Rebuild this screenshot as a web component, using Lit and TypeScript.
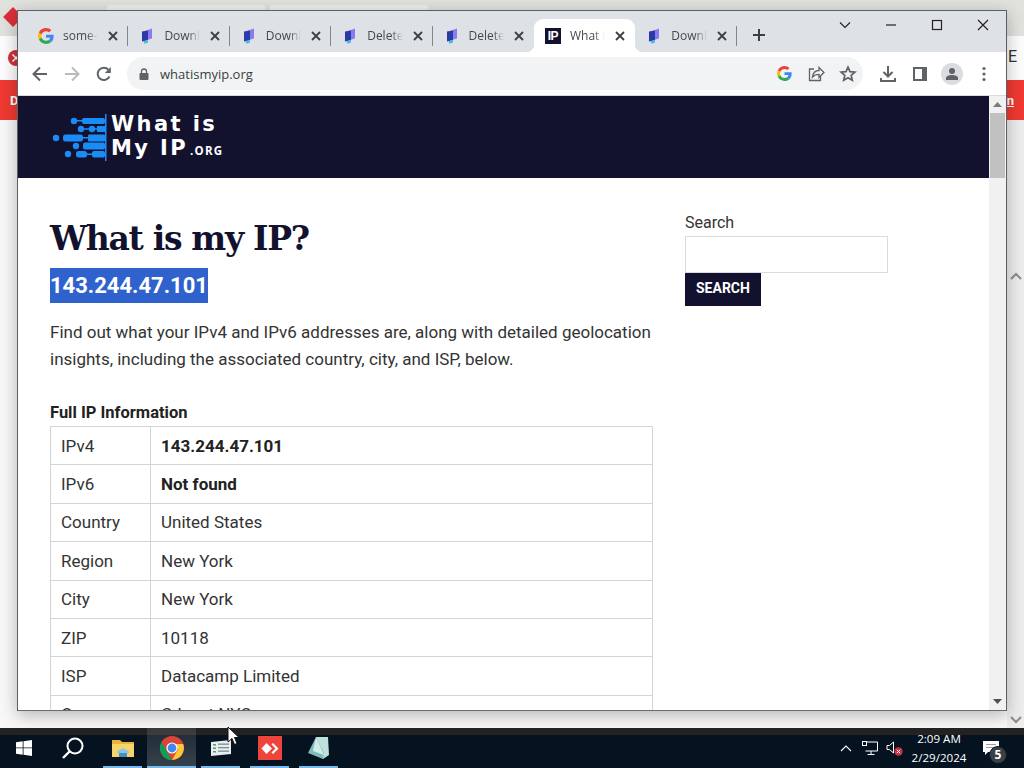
import { LitElement, html, css, svg } from "lit";
import { customElement } from "lit/decorators.js";

const gLogo = html`<svg class="g" viewBox="0 0 48 48"><path fill="#EA4335" d="M24 9.5c3.54 0 6.71 1.22 9.21 3.6l6.85-6.85C35.9 2.38 30.47 0 24 0 14.62 0 6.51 5.38 2.56 13.22l7.98 6.19C12.43 13.72 17.74 9.5 24 9.5z"/><path fill="#4285F4" d="M46.98 24.55c0-1.57-.15-3.09-.38-4.55H24v9.02h12.94c-.58 2.96-2.26 5.48-4.78 7.18l7.73 6c4.51-4.18 7.09-10.36 7.09-17.65z"/><path fill="#FBBC05" d="M10.53 28.59c-.48-1.45-.76-2.99-.76-4.59s.27-3.14.76-4.59l-7.98-6.19C.92 16.46 0 20.12 0 24c0 3.88.92 7.54 2.56 10.78l7.97-6.19z"/><path fill="#34A853" d="M24 48c6.48 0 11.93-2.13 15.89-5.81l-7.73-6c-2.15 1.45-4.92 2.3-8.16 2.3-6.26 0-11.57-4.22-13.47-9.91l-7.98 6.19C6.51 42.62 14.62 48 24 48z"/></svg>`;

const flag = html`<svg class="g" viewBox="0 0 16 16"><path fill="#8a7bf0" d="M6 3 13 .5v10L6 12.500z"/><path fill="#2a3ba8" d="M3 3.500 9 2.500v9.500l-6 1.500z"/><path fill="#45bcdc" d="M4.500 13.200 9 12v2.500l-3.500 1.300z"/></svg>`;
const ipIcon = html`<span class="ipfav">IP</span>`;

const tabs = [
  { icon: gLogo, title: "some-" },
  { icon: flag, title: "Downl" },
  { icon: flag, title: "Downl" },
  { icon: flag, title: "Delete" },
  { icon: flag, title: "Delete" },
  { icon: ipIcon, title: "What i", active: true },
  { icon: flag, title: "Downl" },
];

const rows: [string, string, boolean?][] = [
  ["IPv4", "143.244.47.101", true],
  ["IPv6", "Not found", true],
  ["Country", "United States"],
  ["Region", "New York"],
  ["City", "New York"],
  ["ZIP", "10118"],
  ["ISP", "Datacamp Limited"],
  ["Org", "Cdnext NYC"],
];

const x = html`<svg class="x" viewBox="0 0 10 10"><path d="M1 1l8 8M9 1l-8 8" stroke="#3c4043" stroke-width="1.800" fill="none"/></svg>`;

@customElement("app-root")
export class AppRoot extends LitElement {
  static styles = css`
    :host { display: flex; flex-direction: column; width: 1024px; height: 768px; overflow: hidden; position: relative; background: #f2f2f2; font-family: Roboto, sans-serif; }
    .desktop { flex: 1; position: relative; background: linear-gradient(#fdfdfd 120px, #f8f8f8 120px); }
    .top { position: absolute; left: 0; right: 0; top: 0; height: 36px; background: #e1e1de; }
    .ghost { position: absolute; top: 5px; height: 8px; background: #eeeeec; border-radius: 3px 3px 0 0; }
    .ghost.a { left: 107px; width: 158px; }
    .ghost.b { left: 270px; width: 158px; }
    .diamond { position: absolute; left: 6px; top: 10px; width: 14px; height: 14px; background: #dc2f3c; transform: rotate(45deg); }
    .errdot { position: absolute; left: 8px; top: 50px; width: 16px; height: 16px; display: block; }
    .edge { position: absolute; left: 1008px; top: 47px; font-size: 16px; line-height: 20px; color: #333; }
    .banner { position: absolute; left: 0; right: 0; top: 80px; height: 40px; background: #f03a33; color: #fff; font-size: 13px; font-weight: 700; display: flex; align-items: center; justify-content: space-between; padding: 0 10px; box-sizing: border-box; }
    .rightbar { position: absolute; left: 1007px; right: 0; top: 120px; bottom: 0; background: #ededed; }
    .chev { position: absolute; left: 1010px; width: 12px; height: 8px; }
    .win { position: absolute; left: 17px; top: 10px; width: 990px; height: 701px; box-sizing: border-box; border: 1px solid #5c5f63; border-bottom-color: #6b6b6b; background: #fff; box-shadow: 0 4px 16px rgba(0,0,0,.28); display: flex; flex-direction: column; overflow: hidden; }
    .strip { height: 41px; flex: none; background: #dee1e6; display: flex; padding-left: 9px; font-family: "Open Sans", sans-serif; }
    .tabs { display: flex; align-items: flex-end; flex: 1; }
    .tab { width: 101.4px; height: 33px; box-sizing: border-box; display: flex; align-items: center; padding: 0 7px 0 11px; position: relative; flex: none; }
    .tab.sep::after { content: ""; position: absolute; right: 0; top: 7px; height: 20px; width: 1px; background: #80868b; }
    .tab.active { background: #fff; border-radius: 9px 9px 0 0; }
    .tab.active::before { content: ""; position: absolute; left: -8px; bottom: 0; width: 8px; height: 8px; background: radial-gradient(circle at 0 0, transparent 8px, #fff 8.500px); }
    .tab.active::after { content: ""; position: absolute; right: -8px; bottom: 0; width: 8px; height: 8px; background: radial-gradient(circle at 100% 0, transparent 8px, #fff 8.500px); }
    .g { width: 16px; height: 16px; flex: none; display: block; }
    .ipfav { width: 16px; height: 16px; flex: none; background: #12122f; color: #fff; font: 700 12px/16px "Liberation Sans Narrow", "Liberation Sans", sans-serif; text-align: center; letter-spacing: -.5px; }
    .title { margin-left: 9px; flex: 1; min-width: 0; overflow: hidden; white-space: nowrap; font-size: 12px; color: #45494e; -webkit-mask-image: linear-gradient(90deg, #000 68%, transparent 100%); mask-image: linear-gradient(90deg, #000 68%, transparent 100%); }
    .x { width: 10px; height: 10px; margin: 0 3px 0 10px; flex: none; display: block; }
    .plus { width: 14px; height: 14px; margin: 0 0 3px 15px; align-self: center; flex: none; position: relative; top: 5px; }
    .ctl { display: flex; align-items: flex-start; }
    .ctl div { width: 46px; height: 28px; display: flex; align-items: center; justify-content: center; }
    .ctl svg { width: 12px; height: 12px; display: block; }
    .bar { height: 43px; flex: none; background: #fff; border-bottom: 1px solid #d8dadd; display: flex; align-items: center; box-sizing: content-box; padding-left: 6px; }
    .nav { width: 32px; height: 32px; display: flex; align-items: center; justify-content: center; flex: none; }
    .nav svg { width: 18px; height: 18px; display: block; }
    .omni { margin-left: 7px; width: 736px; height: 33px; border-radius: 17px; background: #f1f3f4; display: flex; align-items: center; padding-left: 12px; box-sizing: border-box; flex: none; }
    .lock { width: 10px; height: 12px; flex: none; display: block; }
    .url { margin-left: 11px; font: 13px "Open Sans", sans-serif; color: #3c4043; flex: 1; }
    .omni .nav svg.g { width: 15px; height: 15px; }
    .omni .right { display: flex; margin-right: -1px; }
    .tools { display: flex; margin-left: 9px; }
    .avatar { width: 22px; height: 22px; border-radius: 50%; background: #dadce0; display: flex; align-items: center; justify-content: center; }
    .avatar svg { width: 14px; height: 14px; }
    .body { flex: 1; min-height: 0; display: flex; }
    .page { flex: 1; min-width: 0; overflow: hidden; background: #fff; color: #333; }
    .head { height: 82px; background: #12122f; display: flex; align-items: center; padding-left: 34px; }
    .logo { width: 57px; height: 48px; flex: none; display: block; }
    .wm { margin: -3px 0 0 2px; color: #fff; font: 700 21px/24px "DejaVu Sans", sans-serif; letter-spacing: 2.4px; white-space: nowrap; }
    .wm small { font: 700 11.500px "Open Sans", sans-serif; letter-spacing: 1.200px; margin-left: 2px; }
    .content { display: flex; padding: 35px 0 0 32px; gap: 32px; }
    .main { width: 603px; flex: none; }
    h1 { margin: 0; font: 700 33px/52px "DejaVu Serif", serif; color: #12122f; letter-spacing: -1.300px; }
    .ip { display: inline-block; background: #2f62cc; color: #fff; font-weight: 700; font-size: 22px; line-height: 35px; margin-top: 3px; vertical-align: top; }
    .intro { margin: 16px 0 0; font-size: 17px; line-height: 27px; color: #333; }
    h2 { margin: 27px 0 0; font-size: 16.500px; line-height: 26px; font-weight: 700; color: #222; }
    table { border-collapse: collapse; width: 603px; margin-top: 0; font-size: 17px; color: #333; table-layout: fixed; }
    td { border: 1px solid #d4d4d4; padding: 0 10px; height: 37.400px; box-sizing: content-box; }
    td:first-child { width: 79px; }
    td b { color: #222; }
    .side { width: 203px; flex: none; }
    .side label { display: block; font-size: 16px; line-height: 20px; color: #333; }
    .input { height: 37px; box-sizing: border-box; border: 1px solid #dcdce0; margin-top: 3px; }
    .btn { display: inline-block; background: #12122f; color: #fff; font-weight: 700; font-size: 14px; line-height: 31px; padding: 0 11px 2px; }
    .scroll { width: 17px; flex: none; background: #f1f1f1; display: flex; flex-direction: column; align-items: center; }
    .scroll svg { width: 9px; height: 5px; display: block; flex: none; }
    .thumb { width: 15px; height: 65px; background: #c1c1c1; margin-top: 6px; flex: none; }
    .sp { flex: 1; }
    .scroll .up { margin-top: 6px; }
    .scroll .dn { margin-bottom: 6px; }
    .task { height: 40px; flex: none; background: linear-gradient(#242324 7px, #04131f 7px); display: flex; align-items: stretch; color: #fff; font-family: "Open Sans", sans-serif; }
    .slot { display: flex; align-items: center; justify-content: center; position: relative; width: 49px; flex: none; }
    .slot.s0 { width: 48px; }
    .slot.s1 { width: 50px; }
    .slot.on::after { content: ""; position: absolute; left: 5px; right: 5px; bottom: 0; height: 2px; background: #76b9ed; }
    .slot.hl { background: linear-gradient(rgba(255,255,255,.1), rgba(255,255,255,.2)); }
    .slot.hl::after { left: 0; right: 0; }
    .slot svg { display: block; }
    .tray { margin-left: auto; display: flex; align-items: stretch; }
    .tray .ti { display: flex; align-items: center; justify-content: center; width: 24px; }
    .clock { width: 62px; margin-left: 2px; display: flex; flex-direction: column; justify-content: center; align-items: center; font-size: 11.600px; line-height: 19px; white-space: nowrap; }
    .notif { width: 48px; display: flex; align-items: center; justify-content: center; position: relative; margin-right: 8px; margin-left: -2px; }
    .notif svg { margin-left: -2px; }
    .badge { position: absolute; left: 21px; top: 18px; width: 16px; height: 16px; border-radius: 50%; background: #3b4044; border: 1px solid #0a1722; color: #fff; font-size: 12px; font-weight: 700; line-height: 16px; text-align: center; }
    .cursor { position: absolute; left: 227px; top: 726px; width: 13px; height: 20px; }
  `;

  render() {
    const I = "#5f6368";
    return html`
      <div class="desktop">
        <div class="top"></div>
        <div class="ghost a"></div><div class="ghost b"></div>
        <div class="diamond"></div>
        <svg class="errdot" viewBox="0 0 16 16"><circle cx="8" cy="8" r="8" fill="#d3303c"/><path d="M4.500 4.500l7 7M11.500 4.500l-7 7" stroke="#fff" stroke-width="1.500"/></svg>
        <span class="edge">E</span>
        <div class="banner"><span>D</span><u>n</u></div>
        <div class="rightbar"></div>
        <svg class="chev" style="top:272px" viewBox="0 0 12 8"><path d="M1 7l5-5 5 5" stroke="#8c8c8c" stroke-width="2" fill="none"/></svg>
        <svg class="chev" style="top:716px" viewBox="0 0 12 8"><path d="M1 1l5 5 5-5" stroke="#8c8c8c" stroke-width="2" fill="none"/></svg>

        <div class="win">
          <div class="strip">
            <div class="tabs">
              ${tabs.map((t, i) => html`<div class="tab ${t.active ? "active" : ""} ${!t.active && i !== 4 ? "sep" : ""}">
                ${t.icon}<span class="title">${t.title}</span>${x}
              </div>`)}
              <svg class="plus" viewBox="0 0 14 14"><path d="M7 1v12M1 7h12" stroke="#3c4043" stroke-width="2" fill="none"/></svg>
            </div>
            <div class="ctl">
              <div><svg viewBox="0 0 12 12"><path d="M1 3.500l5 5 5-5" stroke="#222" stroke-width="1.100" fill="none"/></svg></div>
              <div><svg viewBox="0 0 12 12"><path d="M1 6h10" stroke="#222" stroke-width="1.200" fill="none"/></svg></div>
              <div><svg viewBox="0 0 12 12"><rect x="1.500" y="1.500" width="9" height="9" stroke="#222" stroke-width="1.200" fill="none"/></svg></div>
              <div><svg viewBox="0 0 12 12"><path d="M1 1l10 10M11 1L1 11" stroke="#222" stroke-width="1.200" fill="none"/></svg></div>
            </div>
          </div>
          <div class="bar">
            <div class="nav"><svg viewBox="0 0 18 18"><path d="M16 9H3M9 2.500 2.500 9 9 15.500" stroke="${I}" stroke-width="2" fill="none"/></svg></div>
            <div class="nav"><svg viewBox="0 0 18 18"><path d="M2 9h13M9 2.500 15.500 9 9 15.500" stroke="#b9bbbe" stroke-width="2" fill="none"/></svg></div>
            <div class="nav"><svg viewBox="0 0 18 18"><path d="M14.500 11.500A6.200 6.200 0 1 1 13.400 4.600" stroke="${I}" stroke-width="2" fill="none"/><path d="M15.800 2v6h-6z" fill="${I}"/></svg></div>
            <div class="omni">
              <svg class="lock" viewBox="0 0 10 12"><path d="M2.500 5V3.500a2.500 2.500 0 0 1 5 0V5" stroke="${I}" stroke-width="1.300" fill="none"/><rect x="0.500" y="5" width="9" height="7" rx="1" fill="${I}"/></svg>
              <span class="url">whatismyip.org</span>
              <div class="right">
                <div class="nav">${gLogo}</div>
                <div class="nav"><svg viewBox="0 0 18 18"><path d="M7 4H2.500v11.500h11V11" stroke="${I}" stroke-width="1.300" fill="none"/><path d="M5.500 12c.500-4 3-6.500 6.500-6.500V2.500l5 5-5 5V9.300c-3 0-5 .8-6.500 2.700z" stroke="${I}" stroke-width="1.300" fill="none"/></svg></div>
                <div class="nav"><svg viewBox="0 0 18 18"><path d="M9 2.200l2 4.500 4.900.500-3.700 3.200 1.100 4.800L9 12.700l-4.300 2.500 1.100-4.800L2.100 7.200 7 6.700z" stroke="${I}" stroke-width="1.700" fill="none"/></svg></div>
              </div>
            </div>
            <div class="tools">
              <div class="nav"><svg viewBox="0 0 18 18"><path d="M9 1v10M4.500 7 9 11.500 13.500 7" stroke="${I}" stroke-width="2" fill="none"/><path d="M2 13v3h14v-3" stroke="${I}" stroke-width="2" fill="none"/></svg></div>
              <div class="nav"><svg viewBox="0 0 18 18"><path fill-rule="evenodd" fill="${I}" d="M2 2h14v14H2zM4 4v10h7V4z"/></svg></div>
              <div class="nav"><div class="avatar"><svg viewBox="0 0 14 14"><circle cx="7" cy="4" r="3" fill="${I}"/><path d="M1 13v-2c0-2 3-3 6-3s6 1 6 3v2z" fill="${I}"/></svg></div></div>
              <div class="nav"><svg viewBox="0 0 18 18"><circle cx="9" cy="3.500" r="1.600" fill="${I}"/><circle cx="9" cy="9" r="1.600" fill="${I}"/><circle cx="9" cy="14.500" r="1.600" fill="${I}"/></svg></div>
            </div>
          </div>
          <div class="body">
            <div class="page">
              <div class="head">
                <svg class="logo" viewBox="0 0 57 48">
                  ${svg`<g fill="#1a8cf5"><rect x="53" y="1" width="1.500" height="47"/>
                    <rect x="24" y="7" width="6" height="1.500"/><circle cx="22" cy="8" r="3.200"/><rect x="30" y="5" width="23" height="6" rx="2"/>
                    <circle cx="29" cy="16" r="3.200"/><circle cx="40" cy="16" r="3.200"/><rect x="45" y="13" width="8" height="6"/><rect x="30" y="15.200" width="20" height="1.500"/>
                    <circle cx="4" cy="25" r="3.200"/><rect x="11" y="21.500" width="20" height="7" rx="2.500"/><rect x="31" y="24" width="6" height="1.500"/><rect x="36" y="21.500" width="17" height="7" rx="1"/>
                    <circle cx="24" cy="33" r="3.200"/><rect x="31" y="29.500" width="22" height="7" rx="2"/>
                    <circle cx="16" cy="41" r="3.200"/><rect x="24" y="38" width="11" height="6.500" rx="2.500"/><rect x="35" y="40.500" width="6" height="1.500"/><rect x="40" y="38" width="13" height="6.500" rx="2"/></g>`}
                </svg>
                <div class="wm">What is<br />My IP<small>.ORG</small></div>
              </div>
              <div class="content">
                <div class="main">
                  <h1>What is my IP?</h1>
                  <div class="ip">143.244.47.101</div>
                  <p class="intro">Find out what your IPv4 and IPv6 addresses are, along with detailed geolocation insights, including the associated country, city, and ISP, below.</p>
                  <h2>Full IP Information</h2>
                  <table>
                    ${rows.map(([k, v, b]) => html`<tr><td>${k}</td><td>${b ? html`<b>${v}</b>` : v}</td></tr>`)}
                  </table>
                </div>
                <div class="side">
                  <label>Search</label>
                  <div class="input"></div>
                  <span class="btn">SEARCH</span>
                </div>
              </div>
            </div>
            <div class="scroll">
              <svg class="up" viewBox="0 0 9 5"><path d="M4.500 0 9 5H0z" fill="#7a7a7a"/></svg>
              <div class="thumb"></div>
              <div class="sp"></div>
              <svg class="dn" viewBox="0 0 9 5"><path d="M0 0h9L4.500 5z" fill="#505050"/></svg>
            </div>
          </div>
        </div>
      </div>

      <div class="task">
        <div class="slot s0"><svg width="16" height="16" viewBox="0 0 16 16"><path fill="#fff" d="M0 2.300 6.700 1.300V7.500H0zM7.500 1.200 16 0V7.500H7.500zM0 8.300H6.700V14.700L0 13.700zM7.500 8.300H16V16L7.500 14.800z"/></svg></div>
        <div class="slot s1"><svg width="22" height="22" viewBox="0 0 22 22"><circle cx="13" cy="9" r="7.500" stroke="#fff" stroke-width="2" fill="none"/><path d="M7.500 14.500 1 21" stroke="#fff" stroke-width="2.400"/></svg></div>
        <div class="slot on"><svg width="22" height="18" viewBox="0 0 22 18"><path fill="#e9b43c" d="M0 1h8l2 2h12v15H0z"/><path fill="#f6d56a" d="M0 5h22v13H0z"/><path fill="#3f8fc9" d="M7 11h8v7H7z"/><path fill="#8fc3e6" d="M5 12.500 11 9l6 3.500v1.500H5z"/></svg></div>
        <div class="slot on hl"><svg width="24" height="24" viewBox="0 0 24 24"><circle cx="12" cy="12" r="12" fill="#db4437"/><path d="M12 24A12 12 0 0 1 1.600 6l6 10.400z" fill="#0f9d58"/><path d="M12 24l6-10.400-3-5.600h8.200A12 12 0 0 1 12 24z" fill="#fcc934"/><circle cx="12" cy="12" r="5.600" fill="#fff"/><circle cx="12" cy="12" r="4.400" fill="#4285f4"/></svg></div>
        <div class="slot on"><svg width="22" height="16" viewBox="0 0 22 16"><path fill="#e8eef0" d="M1 2 21 0v14L1 16z"/><g fill="#5a9a6a"><rect x="3" y="4" width="3" height="1.500"/><rect x="3" y="7.500" width="3" height="1.500"/><rect x="3" y="11" width="3" height="1.500"/></g><g fill="#7b8a90"><rect x="8" y="3.500" width="11" height="1.300"/><rect x="8" y="7" width="11" height="1.300"/><rect x="8" y="10.500" width="11" height="1.300"/></g></svg></div>
        <div class="slot on"><svg width="24" height="24" viewBox="0 0 24 24"><rect width="24" height="24" fill="#ef443b"/><path d="M8.500 7 14 12.500 8.500 18 3.500 12.500z" fill="#fff"/><path d="M15 7l5.500 5.500L15 18l-1.500-1.500 4-4-4-4z" fill="#fff"/></svg></div>
        <div class="slot on"><svg width="24" height="24" viewBox="0 0 24 24"><path d="M9 1h12l1 18-6 4z" fill="#bfe0dc"/><path d="M9 1 1 17l15 6 1-6z" fill="#7dbcbb"/><path d="M9 1 6 15l11 4z" fill="#d4ece8"/></svg></div>
        <div class="tray">
          <div class="ti"><svg width="12" height="7" viewBox="0 0 12 7"><path d="M1 6l5-5 5 5" stroke="#fff" stroke-width="1.100" fill="none"/></svg></div>
          <div class="ti"><svg width="16" height="14" viewBox="0 0 16 14"><path d="M3.500 1H15.500V10H3.500" stroke="#fff" fill="none"/><rect x="0.500" y="0.500" width="4" height="4" fill="#04131f" stroke="#fff"/><path d="M9 10v3M5.500 13.500h7" stroke="#fff" fill="none"/></svg></div>
          <div class="ti"><svg width="17" height="15" viewBox="0 0 17 15"><path d="M1 4.500H3.500L7.500 1V12L3.500 8.500H1z" stroke="#fff" fill="none"/><circle cx="12.500" cy="10.500" r="4.200" fill="#c8303c"/><path d="M10.800 8.800 14.200 12.200M14.200 8.800 10.800 12.200" stroke="#fff"/></svg></div>
          <div class="clock"><span>2:09 AM</span><span>2/29/2024</span></div>
          <div class="notif"><svg width="16" height="15" viewBox="0 0 16 15"><path fill="#fff" d="M0 0h16v11H5l-3 3v-3H0z"/><path d="M3 3.500h10M3 6.500h10" stroke="#9aa0a6" stroke-width="1"/></svg><span class="badge">5</span></div>
        </div>
      </div>
      <svg class="cursor" viewBox="0 0 13 20"><path d="M1 1v15l4-3.500 2.500 6 2.500-1-2.500-6H12z" fill="#fff" stroke="#111" stroke-width="1"/></svg>
    `;
  }
}
